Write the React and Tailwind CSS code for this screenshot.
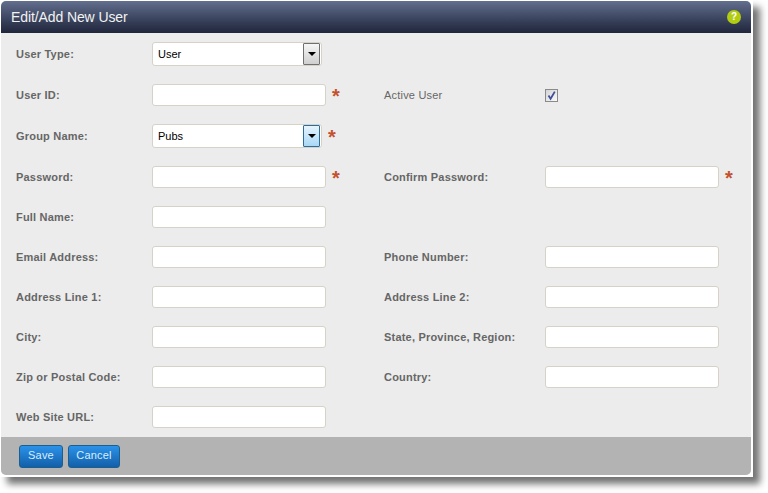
const font = { fontFamily: '"Liberation Sans", Arial, sans-serif' }

function Label({ children, width = 'w-[136px]', plain }) {
  return (
    <label className={`${width} shrink-0 text-[11px] tracking-[0.2px] text-[#666] ${plain ? 'font-normal' : 'font-bold'}`}>
      {children}
    </label>
  )
}

function Star({ className = 'ml-[6px]' }) {
  return (
    <span className={`${className} h-[22px] text-[20px] font-bold leading-[24px] text-[#c4512d]`}>*</span>
  )
}

function TextBox() {
  return <input type="text" className="h-[22px] w-[174px] rounded-[3px] border border-[#d6d2c8] bg-white outline-none" />
}

function SelectBox({ value, focused }) {
  return (
    <div className="flex h-[24px] w-[170px] items-center justify-between rounded-[3px] border border-[#d6d2c8] bg-white pl-[5px] pr-px">
      <span className="text-[11px] text-black">{value}</span>
      <span
        className={`flex h-[22px] w-[17px] items-center justify-center rounded-[1px] border ${
          focused
            ? 'border-[#2c6d9e] bg-gradient-to-b from-[#e6f4fc] to-[#a8d8f6]'
            : 'border-[#707070] bg-gradient-to-b from-[#f6f6f6] to-[#cfcfcf]'
        }`}
      >
        <span className="h-0 w-0 border-x-[4px] border-t-[4px] border-x-transparent border-t-black" />
      </span>
    </div>
  )
}

function Row({ left, right, height = 'h-[22px]' }) {
  return (
    <div className={`flex items-center ${height}`}>
      <div className="flex w-[368px] shrink-0 items-center">{left}</div>
      {right && <div className="flex items-center">{right}</div>}
    </div>
  )
}

function Field({ label, star }) {
  return (
    <>
      <Label>{label}</Label>
      <TextBox />
      {star && <Star />}
    </>
  )
}

function RightField({ label, star }) {
  return (
    <>
      <Label width="w-[161px]">{label}</Label>
      <TextBox />
      {star && <Star />}
    </>
  )
}

export default function App() {
  return (
    <div className="min-h-screen bg-white" style={font}>
      <div className="w-[753px] border-b-2 border-l border-r-2 border-t border-white shadow-[7px_7px_7px_rgba(0,0,0,0.55)]">
        <div className="overflow-hidden rounded-[5px] bg-[#ececec]">
          <div className="flex h-[32px] items-center justify-between bg-gradient-to-b from-[#626f8e] to-[#20263c] pl-[10px] pr-[10px]">
            <h1 className="text-[14px] font-normal tracking-[-0.1px] text-[#f2f2f2]">Edit/Add New User</h1>
            <span className="flex h-[14px] w-[14px] items-center justify-center rounded-full bg-[#b2cc12] text-[10px] font-bold leading-none text-white">?</span>
          </div>

          <div className="flex flex-col gap-[18px] pb-[9px] pl-[15px] pt-[9px]">
            <Row
              height="h-[24px]"
              left={
                <>
                  <Label>User Type:</Label>
                  <SelectBox value="User" />
                </>
              }
            />
            <Row
              left={<Field label="User ID:" star />}
              right={
                <>
                  <Label width="w-[161px]" plain>Active User</Label>
                  <span className="flex h-[13px] w-[13px] items-center justify-center border border-[#8a8a8a] bg-gradient-to-br from-[#d4d4d4] to-[#fafafa]">
                    <svg width="11" height="11" viewBox="0 0 11 11" fill="none">
                      <path d="M2.5 5.5 L4.6 8.8 L8.8 1.6" stroke="#3f4f9a" strokeWidth="1.8" />
                    </svg>
                  </span>
                </>
              }
            />
            <Row
              height="h-[24px]"
              left={
                <>
                  <Label>Group Name:</Label>
                  <SelectBox value="Pubs" focused />
                  <Star />
                </>
              }
            />
            <Row
              left={<Field label="Password:" star />}
              right={<RightField label="Confirm Password:" star />}
            />
            <Row left={<Field label="Full Name:" />} />
            <Row left={<Field label="Email Address:" />} right={<RightField label="Phone Number:" />} />
            <Row left={<Field label="Address Line 1:" />} right={<RightField label="Address Line 2:" />} />
            <Row left={<Field label="City:" />} right={<RightField label="State, Province, Region:" />} />
            <Row left={<Field label="Zip or Postal Code:" />} right={<RightField label="Country:" />} />
            <Row left={<Field label="Web Site URL:" />} />
          </div>

          <div className="flex h-[38px] items-center gap-[5px] bg-[#b3b3b3] pt-px pl-[18px]">
            <button className="h-[23px] w-[44px] rounded-[3px] border border-[#1b5f8e] bg-gradient-to-b from-[#2b93ea] to-[#135fa9] pb-[3px] text-[11px] tracking-[0.2px] text-[#d8edff]">Save</button>
            <button className="h-[23px] w-[52px] rounded-[3px] border border-[#1b5f8e] bg-gradient-to-b from-[#2b93ea] to-[#135fa9] pb-[3px] text-[11px] tracking-[0.2px] text-[#d8edff]">Cancel</button>
          </div>
        </div>
      </div>
    </div>
  )
}
